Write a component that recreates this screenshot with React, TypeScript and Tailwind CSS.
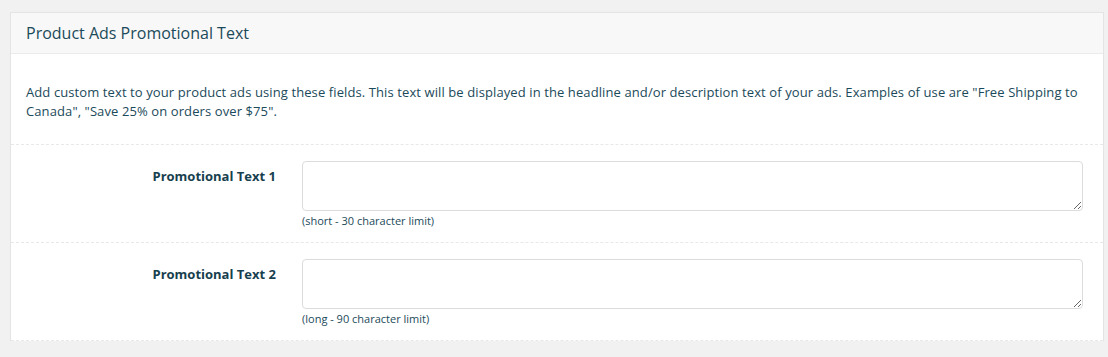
export default function App() {
  const fields = [
    { label: "Promotional Text 1", hint: "(short - 30 character limit)" },
    { label: "Promotional Text 2", hint: "(long - 90 character limit)" },
  ];

  return (
    <main className="min-h-screen bg-[#f1f1f1] pt-[12px] pl-[10px] font-['Open_Sans',sans-serif] text-[#1b4a5a]">
      <div className="w-[1094px] bg-white border-x border-t border-[#e4e4e4]">
        {/* Header */}
        <div className="h-[41px] flex items-center px-[15px] bg-[#f8f8f8] border-b border-[#ebebeb]">
          <h2 className="text-[16px] leading-[20px] text-[#1b4a5a]">Product Ads Promotional Text</h2>
        </div>

        {/* Description */}
        <div className="pt-[29px] pb-[23px] pl-[15px] pr-[20px] border-b border-dashed border-[#e8e8e8]">
          <p className="text-[13px] leading-[19px] tracking-[0.1px]">
            Add custom text to your product ads using these fields. This text will be displayed in the headline and/or description text of your ads. Examples of use are "Free Shipping to Canada", "Save 25% on orders over $75".
          </p>
        </div>

        {/* Fields */}
        {fields.map((f) => (
          <div key={f.label} className="flex pt-[16px] pb-[14px] border-b border-dashed border-[#e8e8e8]">
            <label className="w-[265px] shrink-0 text-right pt-[6px] text-[13px] leading-[18px] font-bold text-[#17404e]">
              {f.label}
            </label>
            <div className="ml-[26px] w-[781px]">
              <textarea className="block w-full h-[50px] border border-[#dcdcdc] rounded-[4px] bg-white resize-y outline-none" />
              <p className="mt-[2px] text-[11px] leading-[15px] text-[#1b4a5a]">{f.hint}</p>
            </div>
          </div>
        ))}
      </div>
    </main>
  );
}
